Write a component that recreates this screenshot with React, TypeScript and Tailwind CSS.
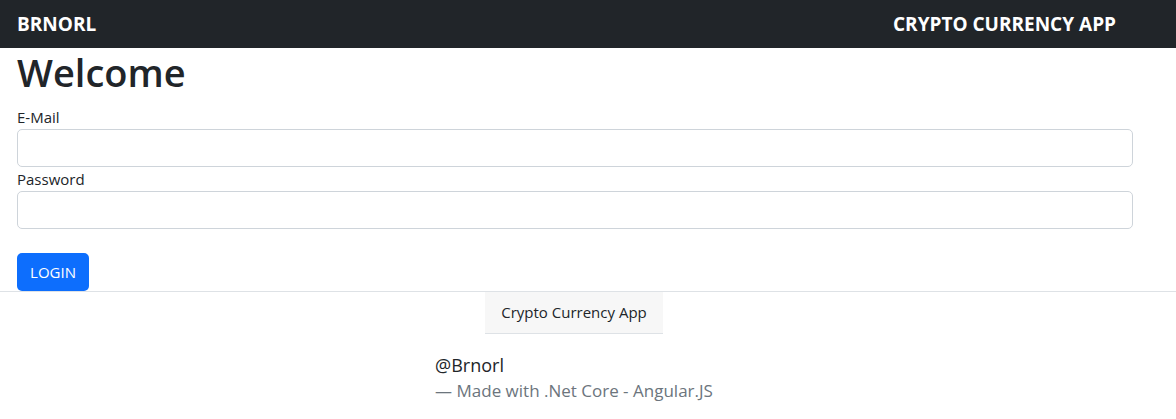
import React from "react";

const font = { fontFamily: "'Open Sans', 'Noto Sans', sans-serif" };

export default function App() {
  return (
    <div className="min-h-[419px] bg-white text-[#212529]" style={font}>
      {/* Navbar */}
      <nav className="flex h-12 items-center justify-between bg-[#212529] pl-[17px] pr-[60px]">
        <span className="text-[19px] font-bold text-white">BRNORL</span>
        <span className="text-[19px] font-bold text-white">CRYPTO CURRENCY APP</span>
      </nav>

      {/* Login form */}
      <main className="pl-[17px]">
        <h1 className="text-[38px] font-semibold leading-[48px]">Welcome</h1>
        <form className="mt-[9px] w-[1116px]">
          <label className="block text-[15px] leading-[24px]">E-Mail</label>
          <input
            type="email"
            className="block h-[38px] w-full rounded-[5px] border border-[#ced4da] px-3"
          />
          <label className="block text-[15px] leading-[24px]">Password</label>
          <input
            type="password"
            className="block h-[38px] w-full rounded-[5px] border border-[#ced4da] px-3"
          />
          <button
            type="button"
            className="mt-6 h-[38px] w-[72px] rounded-[5px] bg-[#0d6efd] text-[15px] text-white"
          >
            LOGIN
          </button>
        </form>
      </main>

      {/* Footer card */}
      <footer className="border-t border-[#dee2e6]">
        <div className="flex w-[1148px] flex-col items-center">
          <div className="flex h-[42px] w-[178px] items-center justify-center border-b border-[#dee2e6] bg-[#f7f7f7] text-[15px]">
            Crypto Currency App
          </div>
          <figure className="mt-[17px] text-left">
            <blockquote className="text-[18px] leading-[28px]">@Brnorl</blockquote>
            <figcaption className="text-[17px] leading-[24px] text-[#6c757d]">
              — Made with .Net Core - Angular.JS
            </figcaption>
          </figure>
        </div>
      </footer>
    </div>
  );
}
